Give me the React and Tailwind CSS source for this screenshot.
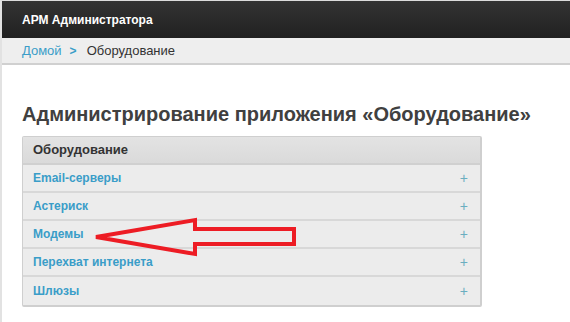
import React from 'react';

const items = ['Email-серверы', 'Астериск', 'Модемы', 'Перехват интернета', 'Шлюзы'];

const App = () => {
  return (
    <div className="relative w-full h-[322px] bg-white border-t border-[#dcdcdc] border-l-2 border-l-[#e2e2e2] overflow-hidden font-['Liberation_Sans',Arial,sans-serif]">
      <div className="h-[37px] flex items-center px-[20px] bg-gradient-to-b from-[#333333] to-[#212121]">
        <span className="text-white font-bold text-[12px]">АРМ Администратора</span>
      </div>

      <div className="h-[27px] flex items-center px-[20px] bg-[#eeeeee] border-b-2 border-[#d0d0d0] text-[13px]">
        <span className="text-[#3a9dc8]">Домой</span>
        <span className="ml-[8px] mr-[10px] text-[#3a9dc8] font-bold text-[12px]">&gt;</span>
        <span className="text-[#333]">Оборудование</span>
      </div>

      <div className="px-[20px] pt-[39px]">
        <h1 className="text-[20px] font-bold text-[#404040] leading-none">Администрирование приложения «Оборудование»</h1>

        <div className="mt-[12px] w-[460px] border border-[#cfcfcf] border-r-2 border-b-2 rounded-[2px] bg-[#ececec]">
          <div className="h-[28px] flex items-center px-[10px] bg-gradient-to-b from-[#e3e3e3] to-[#dadada] border-b-2 border-[#d0d0d0] text-[13px] text-[#333] font-bold">
            Оборудование
          </div>
          {items.map((item, i) => (
            <div
              key={item}
              className={`h-[28px] flex items-center justify-between px-[10px] text-[12px] ${i < items.length - 1 ? 'border-b-2 border-[#d8d8d8]' : ''}`}
            >
              <span className="text-[#3a9dc8] font-bold">{item}</span>
              <span className="text-[#6aaec0] text-[14px] pr-[2px]">+</span>
            </div>
          ))}
        </div>
      </div>

      <svg className="absolute left-0 top-0 pointer-events-none" width="570" height="322">
        <polygon
          points="94,236 193,219 193,228 292,228 292,243 193,243 193,253"
          fill="none"
          stroke="#ed1c24"
          strokeWidth="4"
          strokeLinejoin="miter"
        />
      </svg>
    </div>
  );
};

export default App;
